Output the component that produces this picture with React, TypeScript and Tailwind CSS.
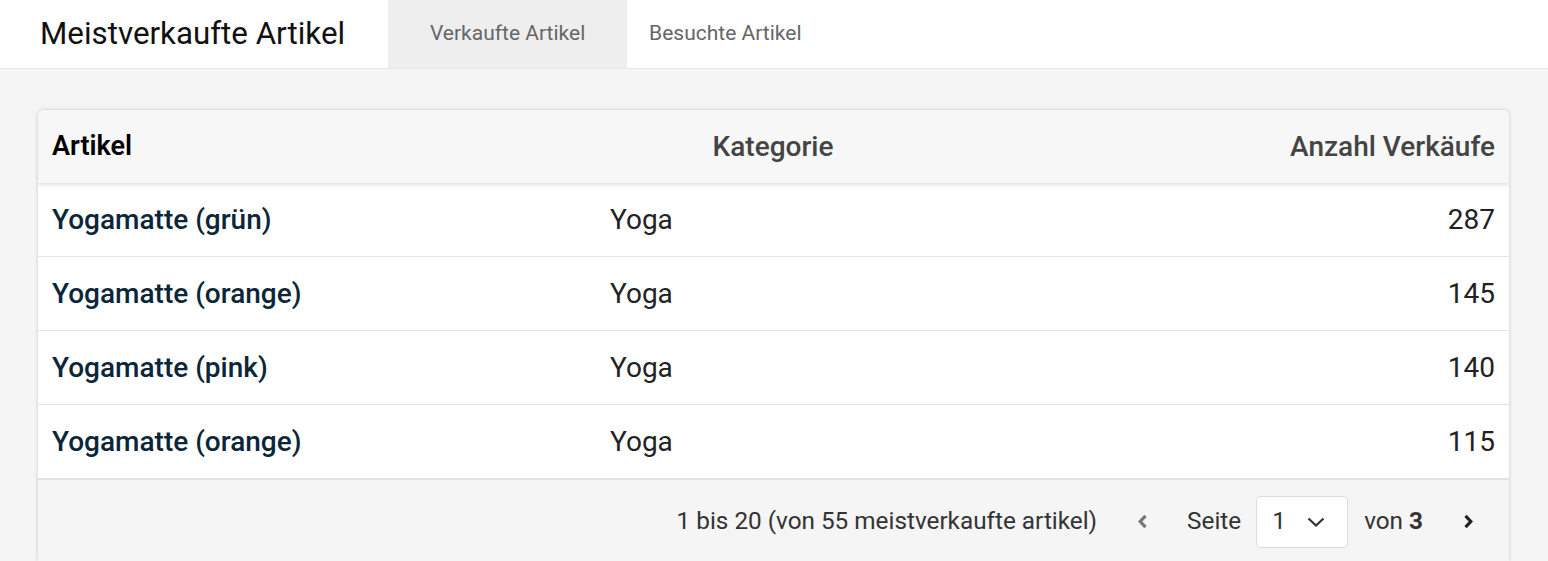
import React from "react";

const rows = [
  { name: "Yogamatte (grün)", cat: "Yoga", n: 287 },
  { name: "Yogamatte (orange)", cat: "Yoga", n: 145 },
  { name: "Yogamatte (pink)", cat: "Yoga", n: 140 },
  { name: "Yogamatte (orange)", cat: "Yoga", n: 115 },
];

export default function App() {
  return (
    <div className="min-h-[561px] bg-[#f5f5f5] font-['Roboto',sans-serif]">
      <div className="flex h-[69px] items-stretch border-b border-[#e6e6e6] bg-white">
        <div className="flex items-center pl-[40px] pr-[43px] text-[31.3px] text-[#111]">Meistverkaufte Artikel</div>
        <div className="flex w-[239px] items-center justify-center bg-[#eeeeee] text-[21px] text-[#666]">Verkaufte Artikel</div>
        <div className="flex items-center px-[22px] text-[21px] text-[#666]">Besuchte Artikel</div>
      </div>
      <div className="px-[38px] pt-[41px] pr-[39px]">
        <div className="overflow-hidden rounded-t-[6px] bg-white shadow-[0_0_4px_rgba(0,0,0,0.18)]">
          <div className="relative z-10 grid h-[73px] grid-cols-[558px_326px_1fr] items-center bg-[#f7f7f7] px-[14px] shadow-[0_2px_3px_rgba(0,0,0,0.12)]">
            <div className="text-[27px] font-semibold text-black">Artikel</div>
            <div className="text-center text-[28px] font-medium text-[#444]">Kategorie</div>
            <div className="text-right text-[28px] font-medium text-[#444]">Anzahl Verkäufe</div>
          </div>
          {rows.map((r, i) => (
            <div
              key={i}
              className="grid h-[74px] grid-cols-[558px_326px_1fr] items-center border-b border-[#e3e3e3] px-[14px]"
            >
              <div className="text-[28px] font-medium text-[#0b2638]">{r.name}</div>
              <div className="text-[28px] text-[#222]">{r.cat}</div>
              <div className="text-right text-[28px] text-[#222]">{r.n}</div>
            </div>
          ))}
          <div className="flex h-[82px] items-center justify-end border-t border-[#e3e3e3] bg-[#f5f5f5] pt-[2px] pr-[35px] text-[24.3px] text-[#333]">
            <span>1 bis 20 (von 55 meistverkaufte artikel)</span>
            <svg className="ml-[40px]" width="11" height="15" viewBox="0 0 11 15">
              <path d="M8.5 1.8 L3.2 7.5 L8.5 13.2" fill="none" stroke="#777" strokeWidth="3.2" />
            </svg>
            <span className="ml-[39px]">Seite</span>
            <div className="ml-[15px] flex h-[52px] w-[92px] items-center rounded-[5px] border border-[#dcdcdc] bg-white pl-[15px]">
              <span>1</span>
              <svg className="ml-[21px]" width="18" height="10" viewBox="0 0 18 10">
                <path d="M1.5 1.5 L9 8.5 L16.5 1.5" fill="none" stroke="#333" strokeWidth="2.2" />
              </svg>
            </div>
            <span className="ml-[16px]">
              von <span className="font-bold">3</span>
            </span>
            <svg className="ml-[40px]" width="11" height="15" viewBox="0 0 11 15">
              <path d="M2.5 1.8 L7.8 7.5 L2.5 13.2" fill="none" stroke="#222" strokeWidth="3.2" />
            </svg>
          </div>
        </div>
      </div>
    </div>
  );
}
